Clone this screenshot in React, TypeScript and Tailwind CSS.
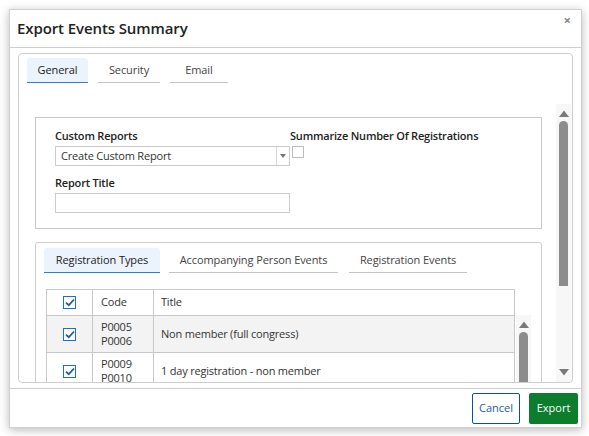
import React from 'react';

const font = { fontFamily: '"Open Sans", "Noto Sans", Arial, sans-serif' };

const CheckBox: React.FC<{ checked?: boolean }> = ({ checked }) =>
  checked ? (
    <span className="flex h-[13px] w-[13px] items-center justify-center border border-[#1f6fc5] bg-white">
      <svg width="10" height="9" viewBox="0 0 10 9">
        <path d="M1 4.6 L3.8 7.2 L9 1.5" fill="none" stroke="#1f5fa8" strokeWidth="1.8" />
      </svg>
    </span>
  ) : (
    <span className="block h-[12px] w-[12px] border border-[#bdbdbd] bg-white" />
  );

const Tab: React.FC<{ label: string; active?: boolean; width: string }> = ({ label, active, width }) => (
  <div
    className={`flex h-[25px] items-center justify-center border-b text-[11px] tracking-[-0.1px] ${width} ${
      active
        ? 'rounded-t-[3px] border-[#2f7fd0] bg-[#ebf4fc] text-[#222]'
        : 'border-[#c4c4c4] text-[#444]'
    }`}
  >
    {label}
  </div>
);

const ScrollBar: React.FC<{ thumb: string; down?: boolean }> = ({ thumb, down }) => (
  <div className="flex h-full w-[15px] flex-col items-center bg-[#f7f7f7]">
    <svg className="mt-[6px]" width="10" height="7" viewBox="0 0 10 7">
      <path d="M0 7 L5 0.5 L10 7 Z" fill="#7a7a7a" />
    </svg>
    <div className={`mt-[4px] w-[9px] rounded-t-full bg-[#8c8c8c] ${thumb}`} />
    {down && (
      <>
        <div className="flex-1" />
        <svg className="mb-[6px]" width="10" height="7" viewBox="0 0 10 7">
          <path d="M0 0 L5 6.5 L10 0 Z" fill="#7a7a7a" />
        </svg>
      </>
    )}
  </div>
);

const rows = [
  { codes: ['P0005', 'P0006'], title: 'Non member (full congress)', bg: 'bg-[#f3f3f3]' },
  { codes: ['P0009', 'P0010'], title: '1 day registration - non member', bg: 'bg-white' },
];

export default function App() {
  return (
    <div className="h-[436px] w-[589px] overflow-hidden bg-white text-[#333]" style={font}>
      <div className="ml-[9px] mt-[9px] flex h-[419px] w-[573px] flex-col border border-[#d0d0d0] bg-white shadow-[0_2px_9px_rgba(0,0,0,0.28)]">
        {/* Header */}
        <div className="flex h-[38px] shrink-0 items-center justify-between border-b border-[#cfcfcf] pl-[7px] pr-[10px]">
          <h1 className="text-[15px] font-semibold tracking-[-0.1px] text-[#222]">Export Events Summary</h1>
          <span className="-mt-[16px] text-[13px] font-bold text-[#888]">×</span>
        </div>

        {/* Body */}
        <div className="px-[8px] pt-[5px]">
          <div className="flex h-[330px] flex-col overflow-hidden rounded-[4px] border border-[#cdcdcd]">
            <div className="flex gap-[10px] pl-[8px] pt-[4px]">
              <Tab label="General" active width="w-[61px]" />
              <Tab label="Security" width="w-[62px]" />
              <Tab label="Email" width="w-[58px]" />
            </div>

            <div className="mt-[21px] flex min-h-0 flex-1">
              <div className="flex-1 overflow-hidden pl-[16px] pr-[14px] pt-[13px] text-[11px] tracking-[-0.2px]">
                {/* Custom report box */}
                <div className="h-[112px] border border-[#c8c8c8] pl-[19px] pt-[10px]">
                  <div className="flex">
                    <div className="w-[235px]">
                      <div className="font-semibold leading-[16px] text-[#222]">Custom Reports</div>
                      <div className="mt-[2px] flex h-[20px] items-center border border-[#cccccc]">
                        <span className="flex-1 pl-[5px]">Create Custom Report</span>
                        <span className="flex h-full w-[13px] items-center justify-center border-l border-[#d6d6d6]">
                          <svg width="6" height="4" viewBox="0 0 6 4">
                            <path d="M0 0 L6 0 L3 4 Z" fill="#777" />
                          </svg>
                        </span>
                      </div>
                    </div>
                    <div>
                      <div className="font-semibold leading-[16px] text-[#222]">Summarize Number Of Registrations</div>
                      <div className="ml-[2px] mt-[2px]">
                        <CheckBox />
                      </div>
                    </div>
                  </div>
                  <div className="mt-[9px] font-semibold leading-[16px] text-[#222]">Report Title</div>
                  <div className="mt-[2px] h-[20px] w-[235px] border border-[#cccccc]" />
                </div>

                {/* Registration box */}
                <div className="mt-[13px] h-[200px] rounded-t-[3px] border border-[#cdcdcd] pl-[8px] pr-[10px] pt-[5px]">
                  <div className="flex">
                    <div className="w-[116px]">
                      <Tab label="Registration Types" active width="w-full" />
                    </div>
                    <div className="ml-[9px] w-[169px]">
                      <Tab label="Accompanying Person Events" width="w-full" />
                    </div>
                    <div className="ml-[11px] w-[118px]">
                      <Tab label="Registration Events" width="w-full" />
                    </div>
                  </div>

                  <div className="mt-[16px] flex">
                    <div className="ml-[2px] w-[469px]">
                      <div className="flex h-[27px] border border-[#c8c8c8] bg-white">
                        <div className="flex w-[46px] items-center justify-center border-r border-[#c8c8c8]">
                          <CheckBox checked />
                        </div>
                        <div className="flex w-[61px] items-center border-r border-[#c8c8c8] pl-[8px]">Code</div>
                        <div className="flex flex-1 items-center pl-[7px]">Title</div>
                      </div>
                      {rows.map((r) => (
                        <div key={r.codes[0]} className={`flex h-[37px] border-x border-b border-[#c8c8c8] ${r.bg}`}>
                          <div className="flex w-[46px] items-center justify-center border-r border-[#c8c8c8]">
                            <CheckBox checked />
                          </div>
                          <div className="flex w-[61px] flex-col justify-center border-r border-[#c8c8c8] pl-[8px] leading-[14px]">
                            <span>{r.codes[0]}</span>
                            <span>{r.codes[1]}</span>
                          </div>
                          <div className="flex flex-1 items-center pl-[7px]">{r.title}</div>
                        </div>
                      ))}
                    </div>
                    <div className="ml-[1px] mt-[26px] h-[80px]">
                      <ScrollBar thumb="h-[60px]" />
                    </div>
                  </div>
                </div>
              </div>
              <div className="mr-[1px]">
                <ScrollBar thumb="h-[165px]" down />
              </div>
            </div>
          </div>
        </div>

        {/* Footer */}
        <div className="mt-[5px] flex flex-1 items-start justify-end gap-[9px] border-t border-[#cfcfcf] pr-[3px] pt-[4px]">
          <button className="h-[31px] w-[48px] rounded-[2px] border border-[#114f92] bg-white text-[11px] text-[#1a5da3]">
            Cancel
          </button>
          <button className="h-[31px] w-[49px] rounded-[2px] bg-[#0b7d2d] text-[11px] text-white">Export</button>
        </div>
      </div>
    </div>
  );
}
